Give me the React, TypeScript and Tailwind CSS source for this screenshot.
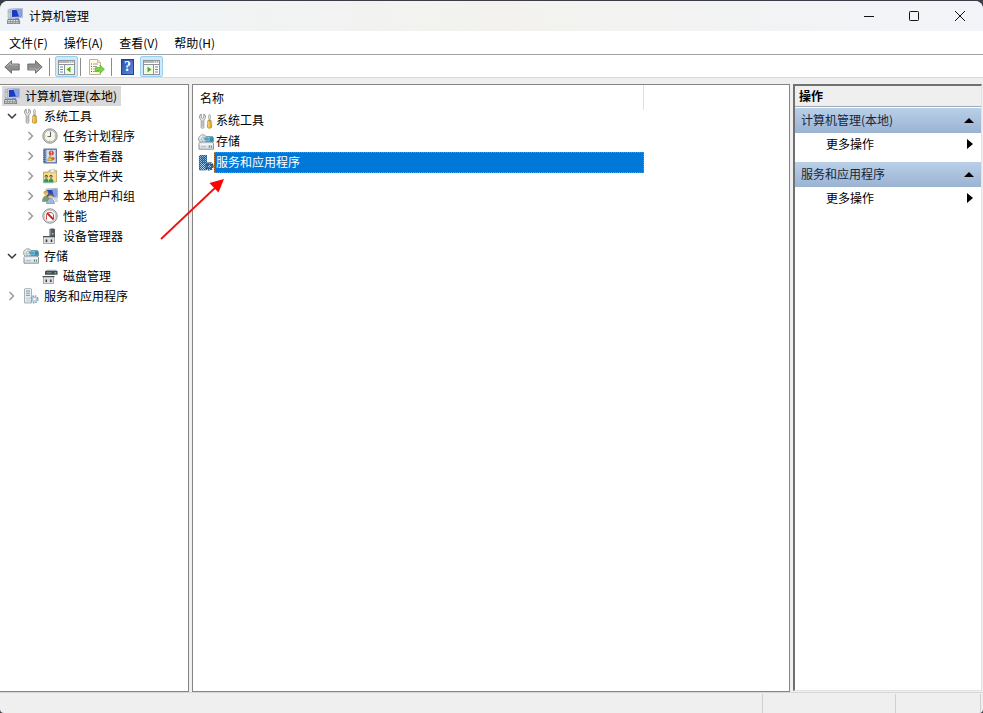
import type { ReactNode } from "react";

type IconProps = { className?: string };

function Svg({ children, className = "" }: { children: ReactNode; className?: string }) {
  return (
    <svg viewBox="0 0 16 16" aria-hidden="true" className={`block size-4 shrink-0 ${className}`}>
      {children}
    </svg>
  );
}

function ComputerIcon({ className }: IconProps) {
  return (
    <Svg className={className}>
      <path d="M1 1.500l3-.5v9H1z" fill="#c9d2d9" stroke="#8f9aa5" strokeWidth=".5" />
      <path d="M1.500 4h2" stroke="#8a96a0" strokeWidth=".7" />
      <path d="M4 .8L15.500.2v9.300L4 10.200z" fill="#d3dbe6" stroke="#8c99aa" strokeWidth=".5" />
      <path d="M5 2l9.500-.6v7L5 9z" fill="#1a3bc0" />
      <path d="M9.500 1.700l5-.3v7l-2.500.2z" fill="#86a2f0" />
      <path d="M8 10h4v1.500H8z" fill="#9aa5b1" />
      <path d="M1 11h11l1 4.500H0z" fill="#7f8b93" stroke="#606b73" strokeWidth=".5" />
      <path d="M1.300 12.500h10.400M1 14.200h11" stroke="#eef1f3" strokeWidth=".9" strokeDasharray="1.800 .8" />
    </Svg>
  );
}

function ToolsIcon({ className }: IconProps) {
  return (
    <Svg className={className}>
      <path
        d="M3.200 1C1.400 2 1 4.200 2 5.700L3.200 7v7.500c0 1 2.600 1 2.600 0V7L7 5.700C8 4.200 7.600 2 5.800 1v3.500l-1.300.8-1.300-.8z"
        fill="#eceeef"
        stroke="#7c8286"
        strokeWidth=".8"
      />
      <path d="M4.500 7.500v6" stroke="#a9aeb2" strokeWidth=".7" />
      <path d="M10.600 2.500l.6-1h.6l.6 1-.4 4.700h-1z" fill="#f2f3f3" stroke="#787e82" strokeWidth=".6" />
      <path d="M10 7.500h3l.5 1.500-.5 1 .6 1.300v2.900c0 1.300-4.200 1.300-4.200 0v-2.900l.6-1.300-.5-1z" fill="#e6b02f" stroke="#a2761a" strokeWidth=".6" />
      <path d="M10.800 8.500v6" stroke="#fbe495" strokeWidth=".9" />
    </Svg>
  );
}

function ClockIcon() {
  return (
    <Svg>
      <circle cx="8" cy="8" r="7.200" fill="#d0d1d4" stroke="#85888e" strokeWidth=".9" />
      <circle cx="8" cy="8" r="5.800" fill="#fbf6dc" stroke="#9a9ca1" strokeWidth=".6" />
      <path d="M8.500 3.800V8.500H5.500" fill="none" stroke="#5b6a84" strokeWidth="1.100" />
      <path d="M8 2.800v.7M8 12.500v.7M2.800 8h.7M12.500 8h.7" stroke="#a08b58" strokeWidth=".8" />
    </Svg>
  );
}

function EventIcon() {
  return (
    <Svg>
      <rect x="2" y="1" width="12.500" height="14" fill="#7f9dc6" stroke="#506c98" strokeWidth=".9" />
      <rect x="4.500" y="2" width="9" height="12" fill="#d3e0f0" />
      <path d="M1 2.800h2.500M1 5h2.500M1 7.200h2.500M1 9.400h2.500M1 11.600h2.500M1 13.600h2.500" stroke="#505b6e" strokeWidth=".9" />
      <circle cx="9.300" cy="5" r="2.500" fill="#d9442f" />
      <path d="M9.300 3.400v1.900M9.300 6v.6" stroke="#fff" strokeWidth=".9" />
      <path d="M8 7.500l2.700 5H5.300z" fill="#f2cb3c" stroke="#a87a0b" strokeWidth=".5" />
      <path d="M8 9.300v1.500" stroke="#6b5210" strokeWidth=".7" />
      <circle cx="11" cy="10.500" r="1.600" fill="#d65a3a" />
    </Svg>
  );
}

function SharedFolderIcon() {
  return (
    <Svg>
      <path d="M1.500 4h4.500l1-1.500h7.500V14h-13z" fill="#eccd73" stroke="#b8944a" strokeWidth=".7" />
      <path d="M8.500 1.500l4-.5v3.500h-4z" fill="#e4f0f4" stroke="#9babb0" strokeWidth=".4" />
      <path d="M2.200 5.500h11.600v8H2.200z" fill="#f7e08f" />
      <circle cx="4.300" cy="8.200" r="1.500" fill="#6b4c2c" />
      <circle cx="4.200" cy="8.800" r=".8" fill="#e3b98d" />
      <path d="M2 14c0-5 4.600-5 4.600 0z" fill="#3c9068" />
      <circle cx="9" cy="8.200" r="1.500" fill="#6b4c2c" />
      <circle cx="8.900" cy="8.800" r=".8" fill="#e3b98d" />
      <path d="M6.800 14c0-5 4.600-5 4.600 0z" fill="#3c9068" />
      <path d="M1 14.700h10.500" stroke="#63b98d" strokeWidth="1" />
    </Svg>
  );
}

function UsersIcon() {
  return (
    <Svg>
      <path d="M4 1l11.500-.6v9.200L4 10.200z" fill="#dce4ed" stroke="#8793a4" strokeWidth=".6" />
      <path d="M5 2l9.500-.5v7L5 9z" fill="#2246bd" />
      <path d="M10 1.700l4.500-.2v7l-2.500.2z" fill="#829ded" />
      <circle cx="4" cy="5.200" r="2.200" fill="#e5bd88" />
      <path d="M1.600 5.600C1 1.500 6.800 1.500 6.300 5 5 4.300 3 4 1.600 5.600z" fill="#d19c31" />
      <path d="M.3 13.500c0-7.500 7.500-7.500 7.500 0z" fill="#799b72" stroke="#55774f" strokeWidth=".4" />
      <circle cx="8.500" cy="8.200" r="2.200" fill="#e7c19a" />
      <path d="M6.100 8.500c-.4-4 5.300-4 4.800 0C9.500 7.300 7.800 7.300 6.100 8.500z" fill="#80603a" />
      <path d="M4.600 15.700c0-7 7.800-7 7.800 0z" fill="#9cbcdb" stroke="#53738f" strokeWidth=".5" />
      <path d="M12 11h3.500M13 13h3" stroke="#a7b0b7" strokeWidth="1.100" />
    </Svg>
  );
}

function PerformanceIcon() {
  return (
    <Svg>
      <circle cx="8" cy="8" r="7.200" fill="#e2e3e4" stroke="#7f8286" strokeWidth=".9" />
      <circle cx="8" cy="8" r="5.700" fill="#fff" stroke="#9da0a3" strokeWidth=".5" />
      <path d="M4.500 11.500V6.500C5.700 3.800 10.300 3.800 11.500 6.500V11" fill="none" stroke="#cf4b42" strokeWidth="1" />
      <path d="M5 5l6.500 6.500" stroke="#c92323" strokeWidth="1.800" />
    </Svg>
  );
}

function DeviceIcon() {
  return (
    <Svg>
      <path d="M7.500 1.500l1-1h3.500l1 1v7.500h-5.500z" fill="#50585e" />
      <path d="M8.700 1.500v6" stroke="#929ca2" strokeWidth=".8" />
      <rect x="10" y="5" width="1.500" height="1.500" fill="#79df98" />
      <path d="M1.500 8.500h11v7h-11z" fill="#dddfe0" stroke="#8a8f92" strokeWidth=".7" />
      <path d="M1 8.600h12" stroke="#4b5156" strokeWidth="1.200" />
      <path d="M4.500 11.500v2.500M9.500 11.500v2.500" stroke="#2e3336" strokeWidth="1.500" />
    </Svg>
  );
}

function StorageIcon({ className }: IconProps) {
  return (
    <Svg className={className}>
      <path d="M5 2.500h9.500l1 1.500v4H5z" fill="#62b4cf" stroke="#60757f" strokeWidth=".6" />
      <path d="M6 4.300l5-.6M8 6l3-.2" stroke="#e3f8fb" strokeWidth="1.100" />
      <path d="M12 3.500h3v3.500h-3z" fill="#2b8eb3" />
      <circle cx="4.800" cy="5" r="4.300" fill="#d4dadd" stroke="#858e93" strokeWidth=".7" />
      <path d="M1.500 3.500l6 2.500M3 1.500l3 6" stroke="#f4f7f8" strokeWidth="1" />
      <circle cx="4.800" cy="4.800" r="1.300" fill="#fff" stroke="#7e888d" strokeWidth=".6" />
      <path d="M5.800 3.500h5v3h-4z" fill="#44a5c7" />
      <path d="M1 9.500L2.500 8h11.500l1.500 1.500v5.700H1z" fill="#e2e6e9" stroke="#6d7982" strokeWidth=".8" />
      <path d="M1.500 10.200h13.500" stroke="#fff" strokeWidth=".8" />
      <path d="M3 12.800h5" stroke="#a1adb5" strokeWidth=".9" />
      <rect x="10.800" y="11.500" width="1" height="2.300" fill="#3b7eaa" />
      <rect x="12.800" y="11.500" width="1.200" height="2.300" fill="#57a85c" />
    </Svg>
  );
}

function DiskIcon() {
  return (
    <Svg>
      <path d="M3.500 3L5 1.800h9L15.500 3z" fill="#a2abb0" />
      <rect x="3" y="3" width="12.500" height="3.800" rx=".5" fill="#42494e" />
      <path d="M4.500 4.800h5" stroke="#98a3a8" strokeWidth=".8" />
      <rect x="12.500" y="4.200" width="1.600" height="1.300" fill="#64d57d" />
      <path d="M1.500 8.500h10v7h-10z" fill="#dddfe0" stroke="#8a8f92" strokeWidth=".7" />
      <path d="M.5 8.600h12" stroke="#4b5156" strokeWidth="1.200" />
      <path d="M4.300 11.500v2.500M8.800 11.500v2.500" stroke="#2e3336" strokeWidth="1.400" />
    </Svg>
  );
}

function ServicesIcon({ selected = false }: { selected?: boolean }) {
  const body = selected ? "#8fc0e8" : "#e8edf0";
  const line = selected ? "#356d9b" : "#8493a0";
  return (
    <Svg>
      <path d="M1.500 1l1-.7h5l1 .7v14h-7z" fill={body} stroke={line} strokeWidth=".7" />
      <path d="M3 3h4M3 5.200h4M3 7.400h4" stroke={line} strokeWidth="1" />
      <path d="M3 10h4M3 12h4M3 14h4" stroke={selected ? "#e3f1fc" : "#b9c4cc"} strokeWidth=".8" />
      <circle cx="11.500" cy="11.300" r="3.400" fill="none" stroke={selected ? "#173f63" : "#7b9db5"} strokeWidth="1.500" strokeDasharray="1.600 1.070" />
      <circle cx="11.500" cy="11.300" r="2.800" fill={selected ? "#32658f" : "#abc6d8"} />
      <circle cx="11.500" cy="11.300" r="1.300" fill={selected ? "#bdddf5" : "#f4f7f8"} />
      {selected && (
        <>
          <defs>
            <pattern id="highlight-dither" width="2" height="2" patternUnits="userSpaceOnUse">
              <path d="M0 0h1v1H0zM1 1h1v1H1z" fill="#0067bd" />
            </pattern>
          </defs>
          <path d="M1 0h8v15H1z" fill="url(#highlight-dither)" />
          <circle cx="11.500" cy="11.300" r="4" fill="url(#highlight-dither)" />
        </>
      )}
    </Svg>
  );
}

function ArrowIcon({ className }: IconProps) {
  return (
    <Svg className={className}>
      <path d="M.8 8L7.500 1.800V5h7.700v6H7.500v3.200z" fill="#8f8f8f" stroke="#6a6a6a" strokeWidth=".9" strokeLinejoin="round" />
      <path d="M2.500 7.800l4-3.800V6h7.700" fill="none" stroke="#b8b8b8" strokeWidth=".9" />
    </Svg>
  );
}

function PaneIcon({ right = false }: { right?: boolean }) {
  return (
    <svg viewBox="0 0 17 16" aria-hidden="true" className="block h-4 w-[17px]">
      <rect x=".5" y="1.500" width="16" height="14" fill="#fff" stroke="#8e9398" />
      <path d="M1 3h15" stroke="#b4b8bc" strokeWidth="2" />
      <path d="M11 3h1M13 3h1M15 3h1" stroke="#fff" />
      <path d="M1 5.500h15" stroke="#8e9398" />
      {right ? (
        <>
          <path d="M10.500 6v9" stroke="#8e9398" />
          <path d="M12 8h3M12 10.500h3M12 13h3" stroke="#5d84c4" strokeWidth="1.200" />
          <rect x="1" y="6" width="9" height="9" fill="#f1fbea" />
          <path d="M4.500 7.500l4 3-4 3z" fill="#4cae1c" />
        </>
      ) : (
        <>
          <path d="M6.500 6v9" stroke="#8e9398" />
          <path d="M2 8h3M2 10.500h3M2 13h3" stroke="#5d84c4" strokeWidth="1.200" />
          <rect x="7" y="6" width="9" height="9" fill="#f1fbea" />
          <path d="M12.500 7.500l-4 3 4 3z" fill="#4cae1c" />
        </>
      )}
    </svg>
  );
}

function ExportIcon() {
  return (
    <svg viewBox="0 0 17 16" aria-hidden="true" className="block h-4 w-[17px]">
      <path d="M1.500.5h8l3 3v12h-11z" fill="#fffbe6" stroke="#b3ac95" strokeWidth=".9" />
      <path d="M9.500.5v3h3" fill="#ece5cc" stroke="#b3ac95" strokeWidth=".7" />
      <path d="M5 5h5M5 7.500h4M5 10h2M5 12.500h6" stroke="#8d97a0" strokeWidth=".9" />
      <path d="M3 5h1M3 7.500h1M3 10h1M3 12.500h1" stroke="#4f545b" />
      <path d="M7.500 8.500H12V6l4.500 4.200L12 14.500V12H7.500z" fill="#7bd43e" stroke="#4cab23" strokeWidth=".6" />
    </svg>
  );
}

function Chevron({ open = false }: { open?: boolean }) {
  return (
    <svg viewBox="0 0 10 10" aria-hidden="true" className="block size-[10px]" fill="none">
      {open ? (
        <path d="M1 3l4 4 4-4" stroke="#3a3a3a" strokeWidth="1.500" />
      ) : (
        <path d="M2.500 1l4 4-4 4" stroke="#969696" strokeWidth="1.400" />
      )}
    </svg>
  );
}

type Node = { label: string; icon: ReactNode; state?: "open" | "closed"; children?: Node[] };

const nodes: Node[] = [
  {
    label: "系统工具",
    icon: <ToolsIcon />,
    state: "open",
    children: [
      { label: "任务计划程序", icon: <ClockIcon />, state: "closed" },
      { label: "事件查看器", icon: <EventIcon />, state: "closed" },
      { label: "共享文件夹", icon: <SharedFolderIcon />, state: "closed" },
      { label: "本地用户和组", icon: <UsersIcon />, state: "closed" },
      { label: "性能", icon: <PerformanceIcon />, state: "closed" },
      { label: "设备管理器", icon: <DeviceIcon /> },
    ],
  },
  {
    label: "存储",
    icon: <StorageIcon />,
    state: "open",
    children: [{ label: "磁盘管理", icon: <DiskIcon /> }],
  },
  { label: "服务和应用程序", icon: <ServicesIcon />, state: "closed" },
];

function Tree({ items, nested = false }: { items: Node[]; nested?: boolean }) {
  return (
    <ul className={nested ? "pl-[19px]" : "pl-[7px]"}>
      {items.map((n) => (
        <li key={n.label}>
          <div className="flex h-5 items-center">
            {n.state ? (
              <button aria-label={`${n.state === "open" ? "折叠" : "展开"} ${n.label}`} className="mr-1.5 w-[10px]">
                <Chevron open={n.state === "open"} />
              </button>
            ) : (
              <span className="mr-1.5 w-[10px]" />
            )}
            <button className="flex h-5 items-center gap-[5px] whitespace-nowrap">
              {n.icon}
              <span className="pb-px">{n.label}</span>
            </button>
          </div>
          {n.children && <Tree items={n.children} nested />}
        </li>
      ))}
    </ul>
  );
}

function ActionGroup({ title }: { title: string }) {
  return (
    <section className="mb-1.5">
      <button className="flex h-[25px] w-full items-center justify-between bg-linear-to-b from-[#bad0e9] to-[#9ab3d1] pr-[7px] pb-px pl-1.5 text-[#16243c]">
        <span>{title}</span>
        <svg viewBox="0 0 10 5" aria-hidden="true" className="h-[5px] w-[10px]">
          <path d="M0 5l5-5 5 5z" fill="#000" />
        </svg>
      </button>
      <button className="flex h-[23px] w-full items-center justify-between pr-2 pb-px pl-[31px]">
        <span>更多操作</span>
        <svg viewBox="0 0 6 10" aria-hidden="true" className="h-[10px] w-1.5">
          <path d="M0 0l6 5-6 5z" fill="#000" />
        </svg>
      </button>
    </section>
  );
}

const rows = [
  { label: "系统工具", icon: <ToolsIcon />, selected: false },
  { label: "存储", icon: <StorageIcon />, selected: false },
  { label: "服务和应用程序", icon: <ServicesIcon selected />, selected: true },
];

function Separator() {
  return <span className="h-[18px] w-px bg-[#8c8c8c]" />;
}

export default function App() {
  return (
    <div className="h-screen overflow-hidden bg-[#3c3c48] pt-px font-['Noto_Sans_CJK_SC',sans-serif] text-xs leading-5 text-black">
      <div className="relative flex h-full flex-col overflow-hidden rounded-t-lg rounded-b-sm bg-[#efefef]">
        <header className="flex h-[30px] shrink-0 items-center bg-linear-to-r from-[#eff4f9] via-[#f3f2ee] to-[#f2f4f9] pb-px pl-[7px]">
          <ComputerIcon />
          <h1 className="ml-1.5 flex-1">计算机管理</h1>
          <button aria-label="最小化" className="flex h-full w-[45px] items-center justify-center">
            <svg viewBox="0 0 10 10" className="size-[10px]" fill="none" stroke="#111">
              <path d="M0 5.500h10" />
            </svg>
          </button>
          <button aria-label="最大化" className="flex h-full w-[45px] items-center justify-center">
            <svg viewBox="0 0 10 10" className="size-[10px]" fill="none" stroke="#111">
              <rect x=".5" y=".5" width="9" height="9" rx=".8" />
            </svg>
          </button>
          <button aria-label="关闭" className="flex h-full w-[47px] items-center justify-center">
            <svg viewBox="0 0 10 10" className="size-[10px]" fill="none" stroke="#111">
              <path d="M0 0l10 10M10 0L0 10" />
            </svg>
          </button>
        </header>

        <nav className="flex h-6 shrink-0 items-center gap-4 border-b border-[#a3a3a3] bg-white pl-[9px]">
          {["文件(F)", "操作(A)", "查看(V)", "帮助(H)"].map((m) => (
            <button key={m}>{m}</button>
          ))}
        </nav>

        <div className="flex h-[23px] shrink-0 items-end border-b border-[#d9d9d9] bg-white pl-1">
          <div className="flex h-[21px] items-center">
            <button aria-label="后退">
              <ArrowIcon />
            </button>
            <button aria-label="前进" className="mr-1.5 ml-[7px]">
              <ArrowIcon className="rotate-180" />
            </button>
            <Separator />
            <button aria-label="显示/隐藏控制台树" className="mr-0.5 ml-[5px] flex h-[21px] w-[23px] items-center justify-center rounded-xs border border-[#99cfef] bg-[#cfe8fb]">
              <PaneIcon />
            </button>
            <Separator />
            <button aria-label="导出列表" className="mr-1.5 ml-[7px]">
              <ExportIcon />
            </button>
            <Separator />
            <button aria-label="帮助" className="mr-1.5 ml-[9px] flex h-4 w-[13px] items-center justify-center border border-[#1f3f93] bg-linear-to-br from-[#2b4fae] to-[#6189d8] font-['Liberation_Serif',serif] text-sm leading-none font-bold text-white">
              ?
            </button>
            <button aria-label="显示/隐藏操作窗格" className="flex h-[21px] w-[23px] items-center justify-center rounded-xs border border-[#99cfef] bg-[#cfe8fb]">
              <PaneIcon right />
            </button>
          </div>
        </div>

        <main className="mt-1.5 flex min-h-0 flex-1 gap-[3px]">
          <aside className="w-[189px] shrink-0 border-y border-r border-[#858585] bg-white pt-px">
            <button className="ml-0.5 flex h-5 items-center gap-[5px] bg-[#d9d9d9] pr-1 pl-0.5 whitespace-nowrap">
              <ComputerIcon />
              <span className="pb-px">计算机管理(本地)</span>
            </button>
            <Tree items={nodes} />
          </aside>

          <section className="min-w-0 flex-1 border border-[#858585] bg-white">
            <table className="w-[451px] border-collapse">
              <thead>
                <tr className="h-[25px]">
                  <th className="border-r border-[#e0e0e0] p-0 pl-[7px] text-left font-normal">名称</th>
                </tr>
              </thead>
              <tbody>
                {rows.map((r) => (
                  <tr key={r.label}>
                    <td className="p-0">
                      <div className="flex h-[21px] items-center pl-[5px]">
                        {r.icon}
                        <span
                          className={
                            r.selected
                              ? "flex h-[21px] flex-1 items-center border border-dotted border-[#c77a30] bg-[#0078d7] pb-px pl-px text-white"
                              : "flex-1 pb-px pl-0.5"
                          }
                        >
                          {r.label}
                        </span>
                      </div>
                    </td>
                  </tr>
                ))}
              </tbody>
            </table>
          </section>

          <aside className="mr-px mb-px w-[189px] shrink-0 border-t-2 border-r border-b border-l-2 border-t-[#707070] border-r-[#e3e3e3] border-b-[#e3e3e3] border-l-[#707070] bg-white">
            <h2 className="mb-px h-[21px] border-b border-[#a0a8b0] bg-[#efefef] pl-1 font-bold">操作</h2>
            <ActionGroup title="计算机管理(本地)" />
            <ActionGroup title="服务和应用程序" />
          </aside>
        </main>

        <footer className="flex h-[21px] shrink-0 border-t border-[#d7d7d7] pt-px pr-0.5">
          <span className="flex-1" />
          <span className="w-[133px] border-l border-[#d0d0d0]" />
          <span className="w-[86px] border-x border-[#d0d0d0]" />
        </footer>

        <svg viewBox="0 0 64 62" aria-hidden="true" className="pointer-events-none absolute top-[178px] left-[160px] h-[62px] w-16">
          <path d="M1 60L56 8" stroke="#ef1010" strokeWidth="1.800" />
          <path d="M64 0L58.500 13.500 49.500 4z" fill="#ff0000" />
        </svg>
      </div>
    </div>
  );
}
